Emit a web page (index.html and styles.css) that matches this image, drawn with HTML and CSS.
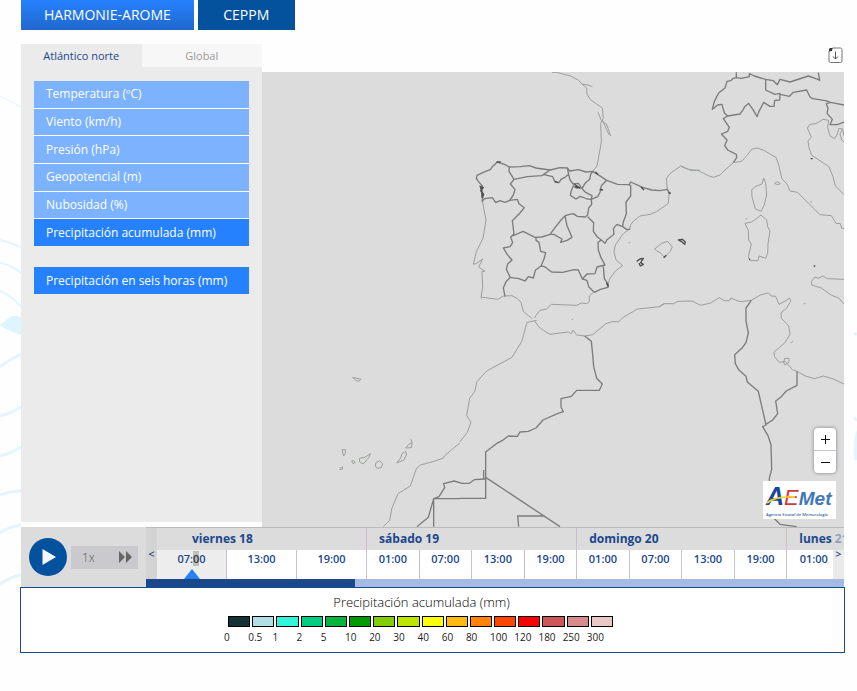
FILE: index.html
```html
<!DOCTYPE html>
<html lang="es">
<head>
<meta charset="utf-8">
<title>Modelos numéricos</title>
<link rel="stylesheet" href="styles.css">
</head>
<body>
<svg class="backdrop" viewBox="0 0 857 691" preserveAspectRatio="none" aria-hidden="true">
  <g fill="none" stroke="#e4f5fd" stroke-width="2">
    <path d="M0 96L21 107" stroke-width="1"/>
    <path d="M0 240Q12 243 21 247M0 263Q12 265 21 273M0 291Q14 298 21 307"/>
    <path d="M0 367Q10 359 21 354M0 416Q12 413 21 407M0 456Q12 453 21 447M0 495Q10 491 21 491M0 533Q8 527 21 525M0 584Q10 577 21 575" stroke-width="3"/>
    <path d="M854 334h3M854 417q2 3 3 3" stroke-width="3"/>
  </g>
  <path d="M0 325L10 317Q16 314 21 318V335Q10 332 0 325Z" fill="#dcf5fe"/>
  <path d="M857 430q-4 8-3 30h3z" fill="#e4f5fd"/>
</svg>
<main class="page">
  <nav class="models">
    <button class="model model-active" type="button">HARMONIE-AROME</button>
    <button class="model" type="button">CEPPM</button>
  </nav>
  <section class="viewer">
    <aside class="panel">
      <div class="tabs">
        <button class="tab tab-active" type="button">Atlántico norte</button>
        <button class="tab" type="button">Global</button>
      </div>
      <div class="menu">
        <button class="item" type="button">Temperatura (ºC)</button>
        <button class="item" type="button">Viento (km/h)</button>
        <button class="item" type="button">Presión (hPa)</button>
        <button class="item" type="button">Geopotencial (m)</button>
        <button class="item" type="button">Nubosidad (%)</button>
        <button class="item item-active" type="button">Precipitación acumulada (mm)</button>
      </div>
      <div class="submenu">
        <button class="item item-active" type="button">Precipitación en seis horas (mm)</button>
      </div>
    </aside>
    <div class="stage">
      <div class="tools">
        <button class="download" type="button" aria-label="Descargar">
          <svg width="15" height="17" viewBox="0 0 15 17" fill="none" stroke="#777">
            <path d="M4.500 1H12.500Q14 1 14 2.500V14Q14 15.500 12.500 15.500H2.500Q1 15.500 1 14V4.500Z"/>
            <path d="M1 4.500V2L2 1H4.500L4 4Z" fill="#333" stroke="none"/>
            <path d="M7.500 4.500V12M5 9.500L7.500 12L10 9.500" stroke="#555"/>
          </svg>
        </button>
      </div>
      <div class="map">
        <svg class="chart" viewBox="262 72 582 455" role="img" aria-label="Mapa del Atlántico norte">
          <g class="coast">
            <g transform="translate(460 60) scale(.33333)">
              <path d="M276 37H292L315 44L330 47L345 55L355 60L367 73L380 84L381 102L391 119L410 132L427 144L430 175L422 190L424 246L418 280L411 318L398 334"/>
              <path d="M414 157L425 184L440 193L452 228M428 181L438 205L448 225M365 72L384 75L397 80"/>
              <path d="M68 425L72 450L78 480L69 535L49 575L40 613L50 610L68 597L56 621L75 634H66L68 680L63 714"/>
              <path d="M720 331L700 330L684 328L662 318L630 341L619 356L622 388L627 400L625 430L590 455L570 463L540 468L520 484L512 494L509 507L490 521L466 555L462 575L468 600L488 617L466 633L449 657L442 680"/>
              <path d="M584 567L605 550L623 544L637 561L630 575L613 592L603 580L590 572ZM506 548h4"/>
            </g>
            <g transform="translate(660 40) scale(.33333)">
              <path d="M220 368L245 364L262 345L275 328L290 324L312 331L330 342L348 352L356 374L366 417L381 432L390 453L412 457L445 489L480 524L514 527L528 550L541 551L545 565H552"/>
              <path d="M220 368L195 390L180 405L160 412L145 407L113 391L96 392L80 386L62 378"/>
              <path d="M552 464L526 437L519 410L507 380L455 346L446 320L444 302L454 292L442 264L450 253L468 251L489 238L506 241L503 262L510 288L524 296L532 282L537 265L548 267L540 282L545 300L552 306M548 267L552 288"/>
              <path d="M311 414L317 430L320 465L312 497L303 514L286 507L276 470L275 450L285 440L306 432ZM303 525L320 540L323 560L330 573L324 612L323 640L317 655L297 648L294 662L270 662L265 650L274 612L266 600L265 572L255 550L275 546L288 537ZM344 430L352 425L361 431L352 434Z"/>
              <path d="M257 537h5M451 486h5"/>
            </g>
            <g transform="translate(460 270) scale(.33333)">
              <path d="M63 86L67 82L113 88L131 78L156 77L172 86L183 97L190 124L205 137L217 146"/>
              <path d="M400 67L388 78V95L380 101L364 99L350 106L274 103L260 117L240 121L228 136L224 144"/>
              <path d="M230 151L201 157L186 213L156 262L80 303L50 336L45 363L29 385L20 436L33 456L22 487L0 515"/>
              <path d="M223 152L236 170L250 181L270 193L325 186L334 191L339 180L350 195L374 198L398 194L438 161L456 155L477 155L488 143L532 117L600 110L614 101"/>
              <path d="M335 148h4"/>
            </g>
            <g transform="translate(660 270) scale(.33333)">
              <path d="M0 108L12 101L40 101L54 94L96 93L122 106L152 99L178 83L192 92L209 92L212 84L240 95L274 91L303 74L325 69L333 78L347 79L357 103L378 92L389 84L392 94L380 114L363 129L364 145L386 168L390 193L374 219L342 246L343 259L358 277L375 275L385 284L397 299L411 304L436 318L464 326L490 318L520 327L552 342"/>
              <path d="M374 265H387V277L375 285L371 278ZM552 102L536 84L515 76L484 54L455 45L454 34L465 21L474 25L489 18L502 26L552 28M431 101h5M392 219L399 214"/>
            </g>
            <g transform="translate(300 360) scale(.33333)">
              <path d="M480 249L472 255L434 287L430 294L403 304L361 315L349 326L331 378L294 401L275 447L269 481L250 500"/>
              <path d="M158 52L183 58L177 64L168 62ZM126 269H136V280L131 288ZM178 295L195 292L211 281L206 293L190 312L179 306ZM228 307L239 303L248 311L244 323L232 325L226 318ZM155 303L160 302L166 307L159 311ZM120 325L127 320V328H118M333 238L336 248L325 254L317 264L334 263L336 248M317 274L320 282L312 300L290 309L302 294L306 281Z"/>
            </g>
          </g>
          <g class="border">
            <g transform="translate(460 60) scale(.33333)">
              <path d="M66 425L70 405L63 388L67 378L58 368L49 356L51 346L70 337L92 328L97 320L112 306L133 313L148 321L181 320L208 317L228 324L270 330L300 323L322 324L329 333L355 329L378 336L398 334L413 343L440 361L473 373L507 374L512 366L548 382L575 390L600 392L622 388L629 400"/>
              <path d="M148 321L147 334L162 358L151 372L165 388L160 405L149 421L135 427L120 422L107 428L97 413L74 416L66 425M162 358L202 350L246 347L270 330M252 344L278 350L285 366L297 368L303 358L315 352L326 343L322 324M326 343L330 360L340 372L355 370L364 382L349 384L340 377L334 392L331 406L348 417L361 409L382 417L394 418L396 407L378 398L366 386L375 370L389 358L392 343L398 334"/>
              <path d="M440 361L424 377L420 397L413 410L394 418L395 433L386 444L383 465L376 471L352 469L340 461L326 464L315 468L303 480L281 508L270 523L245 531L225 532L189 514L158 528M149 421L172 418L177 431L193 443L180 459L157 482L162 522L152 531L158 548L150 560L130 564L142 584L156 600L143 612L139 628L151 652L138 665L130 684L135 710M151 652L176 656L195 663L205 650L220 654L226 631L243 618L252 597L257 578L242 574L237 547L228 541V530"/>
              <path d="M315 468L321 497L336 532L321 541L302 547L306 537L281 523H270M383 470L401 488L400 514L412 531L424 540L435 550L441 539L462 523L460 506L471 493L488 500L490 485L499 462L498 426L512 408L512 377L507 374M488 500L500 508H511M424 540L414 547L415 570L423 593L435 615L411 621L405 641L381 642L367 657L355 630L342 629L308 637L275 636L254 620L243 618M367 657L381 661L386 680L403 697L421 688L444 682L445 673L433 656L430 620"/>
            </g>
            <g transform="translate(660 40) scale(.33333)">
              <path d="M229 97V113L220 115L212 122L201 124L195 144L176 159L163 184L157 208L173 195L186 193L193 219L203 228L240 222L250 208L254 200L266 190L281 212L291 230L297 214L311 187L330 199L342 199L344 181L359 180L360 160L345 163L317 150V118L302 114L283 108L268 101V110L244 115L229 113M317 118L340 122L352 134L360 118L390 126L445 108L474 118L479 121L475 98M360 163L388 169L400 157L440 150L450 171L458 176L496 182L512 187L552 195M203 228L190 236L208 262L203 274L184 282L201 300L194 317L203 330L229 343L230 353L220 368M512 187L499 191L504 205L501 220L517 238L510 254H532L552 246"/>
            </g>
            <g transform="translate(460 270) scale(.33333)">
              <path d="M374 198L394 214L398 253L401 290L410 325L427 342L418 361H350L334 379L303 386V411L310 425L294 430L249 450L228 474L205 484L180 486L172 499L145 498L128 511L109 521L77 546V685H0M71 627V600M77 622L300 770M255 738H173L176 770"/>
            </g>
            <g transform="translate(660 270) scale(.33333)">
              <path d="M274 91L258 114V153L265 189L258 218L247 233L224 254L226 281L236 299L258 319L262 336L295 364L318 465L308 470L324 497L333 525L335 598L328 625L330 720L345 748L360 763L410 770M411 304V346L379 363L362 382L347 393L353 431L338 450L318 463"/>
            </g>
            <g transform="translate(300 360) scale(.33333)">
              <path d="M555 357L523 359L508 370H486L462 363L431 371L434 383L417 410L401 416L385 472L351 500M401 500V416H480"/>
            </g>
          </g>
          <g class="islets" transform="translate(460 60) scale(.33333)">
            <path d="M58 378L70 383L62 392L71 403L65 411M65 380L66 414M60 384H70M342 372L360 384L345 380M543 381L552 390M625 398L633 400M530 604L540 597L550 595L542 608L550 613L541 618L537 609M655 540L667 538L676 546L674 553L665 545ZM611 593L619 586M419 388L429 390M439 668L445 680M406 336L414 343M285 364L294 368M110 306H122"/>
            <path d="M1052 296h6M1061 618h5M867 598h4"/>
          </g>
        </svg>
        <div class="zoom">
          <button class="zoom-button" type="button" aria-label="Acercar"><svg width="22" height="22" viewBox="0 0 22 22"><path d="M7 11.500H16M11.500 7V16"/></svg></button>
          <button class="zoom-button" type="button" aria-label="Alejar"><svg width="22" height="22" viewBox="0 0 22 22"><path d="M7 11.500H16"/></svg></button>
        </div>
        <svg class="logo" width="73" height="38" viewBox="0 0 73 38" role="img" aria-label="AEMet">
          <rect width="73" height="38" fill="#fff"/>
          <text class="logo-name" x="3" y="24"><tspan class="logo-a">A</tspan><tspan class="logo-e">E</tspan><tspan class="logo-met">Met</tspan></text>
          <path d="M4 22Q12 15 32 16" fill="none" stroke="#f8cf32" stroke-width="2"/>
          <text class="logo-caption" x="3" y="35">Agencia Estatal de Meteorología</text>
        </svg>
      </div>
    </div>
  </section>
  <section class="player">
    <div class="controls">
      <button class="play" type="button" aria-label="Reproducir">
        <svg width="38" height="38" viewBox="0 0 38 38"><circle cx="19" cy="19" r="19" fill="#04519e"/><path d="M13.500 11L27 19L13.500 27Z" fill="#f4f8fb"/></svg>
      </button>
      <button class="speed" type="button">1x
        <svg width="14" height="12" viewBox="0 0 14 12"><path d="M1 0L7 6L1 12ZM8 0L14 6L8 12Z" fill="#666"/></svg>
      </button>
    </div>
    <div class="timeline">
      <div class="days">
        <button class="step" type="button" aria-label="Anterior">&lt;</button>
        <div class="day day-first"><div class="date">viernes 18</div><div class="hours"><span class="hour hour-active">07:<mark>0</mark>0</span><span class="hour">13:00</span><span class="hour">19:00</span></div></div>
        <div class="day"><div class="date">sábado 19</div><div class="hours"><span class="hour">01:00</span><span class="hour">07:00</span><span class="hour">13:00</span><span class="hour">19:00</span></div></div>
        <div class="day"><div class="date">domingo 20</div><div class="hours"><span class="hour">01:00</span><span class="hour">07:00</span><span class="hour">13:00</span><span class="hour">19:00</span></div></div>
        <div class="day day-last"><div class="date">lunes 21</div><div class="hours"><span class="hour">01:00</span></div></div>
        <button class="step step-next" type="button" aria-label="Siguiente">&gt;</button>
      </div>
      <div class="progress"><div class="progress-done"></div></div>
    </div>
  </section>
  <section class="legend">
    <h2 class="legend-title">Precipitación acumulada (mm)</h2>
    <ul class="scale">
      <li><i class="swatch c1"></i><span>0</span></li>
      <li><i class="swatch c2"></i><span>0.5</span></li>
      <li><i class="swatch c3"></i><span>1</span></li>
      <li><i class="swatch c4"></i><span>2</span></li>
      <li><i class="swatch c5"></i><span>5</span></li>
      <li><i class="swatch c6"></i><span>10</span></li>
      <li><i class="swatch c7"></i><span>20</span></li>
      <li><i class="swatch c8"></i><span>30</span></li>
      <li><i class="swatch c9"></i><span>40</span></li>
      <li><i class="swatch c10"></i><span>60</span></li>
      <li><i class="swatch c11"></i><span>80</span></li>
      <li><i class="swatch c12"></i><span>100</span></li>
      <li><i class="swatch c13"></i><span>120</span></li>
      <li><i class="swatch c14"></i><span>180</span></li>
      <li><i class="swatch c15"></i><span>250</span></li>
      <li><i class="swatch c16"></i><span>300</span></li>
    </ul>
  </section>
</main>
</body>
</html>
```
FILE: styles.css
```css
* { box-sizing: border-box; }
body { margin: 0; background: #fefefe; font-family: "Open Sans", sans-serif; font-size: 12px; color: #1b478d; }
button { margin: 0; padding: 0; border: 0; background: none; font: inherit; color: inherit; cursor: pointer; }
svg { display: block; }

.backdrop { position: absolute; inset: 0; width: 100%; height: 691px; z-index: -1; }
.page { padding: 0 13px 0 21px; }

.models { display: flex; gap: 4px; margin-bottom: 14px; }
.model { min-width: 97px; height: 30px; padding: 0 23px; background: #04519e; color: #fff; font-size: 14px; line-height: 30px; }
.model-active { background: linear-gradient(#2681ff, #2068cc); }

.viewer { display: flex; }
.panel { width: 241px; flex: none; margin-bottom: 5px; background: #ebebeb; }
.tabs { display: flex; margin-bottom: 14px; }
.tab { flex: 1; height: 23px; background: #f7f7f7; color: #999; font-size: 11px; line-height: 23px; }
.tab-active { background: #ebebeb; color: #1b478d; }
.menu { display: grid; grid-auto-rows: 1fr; gap: 1px; height: 165px; margin: 0 13px 21px; background: #fff; }
.submenu { display: grid; height: 27px; margin: 0 13px; }
.item { min-height: 0; padding: 0 12px; background: #7cb2ff; color: #fff; text-align: left; line-height: 26px; }
.item-active { background: #2681ff; }

.stage { flex: 1; min-width: 0; }
.tools { display: flex; justify-content: flex-end; height: 28px; padding: 3px 1px 0; }
.download { height: 17px; }
.map { position: relative; background: #dcdcdc; }
.chart { width: 100%; height: auto; }
.coast, .border, .islets { fill: none; stroke-linejoin: round; }
.coast { stroke: #9a9f9a; stroke-width: 3; }
.border { stroke: #7c7c7c; stroke-width: 4; }
.islets { stroke: #4c4c4c; stroke-width: 4; }
.zoom { position: absolute; right: 8px; bottom: 54px; width: 22px; border-radius: 4px; background: #fff; box-shadow: 0 0 3px 1px #a5a0a8; }
.zoom-button { display: block; width: 22px; height: 22px; }
.zoom-button path { stroke: #111; stroke-width: 1; }
.zoom-button + .zoom-button { height: 23px; border-top: 1px solid #c5c5d8; }
.logo { position: absolute; right: 8px; bottom: 8px; }
.logo-name { font: italic 22px "Liberation Sans", sans-serif; }
.logo-a { fill: #17469e; font-size: 25px; font-weight: 700; }
.logo-e { fill: #cd3c38; }
.logo-met { fill: #4176b8; font-size: 19px; font-weight: 700; }
.logo-caption { fill: #3267a8; font: 600 4px "Open Sans", sans-serif; }

.player { display: flex; height: 60px; background: #dcdcdc; }
.controls { display: flex; align-items: center; gap: 4px; width: 125px; flex: none; padding-left: 8px; }
.speed { display: flex; align-items: center; justify-content: space-between; width: 67px; height: 23px; padding: 0 6px 0 11px; background: #cacace; color: #555; font-weight: 300; }
.timeline { display: flex; flex-direction: column; flex: 1; min-width: 0; border-top: 1px solid #bbb; }
.days { position: relative; display: flex; flex: 1; min-height: 0; overflow: hidden; }
.step { width: 11px; flex: none; background: #d3d3d3; font-size: 11px; font-weight: 600; }
.step-next { position: absolute; top: 0; right: 0; bottom: 0; background: #dcdcdc99; }
.day { flex: 210 1 0; min-width: 0; background: #fff; }
.day + .day { border-left: 1px solid #cbbfd0; }
.day-last { flex-grow: 57; overflow: hidden; }
.date { height: 22px; padding-left: 12px; background: #dcdcdc; font-weight: 700; line-height: 22px; white-space: nowrap; }
.day-first .date { padding-left: 35px; }
.hours { display: flex; }
.hour { position: relative; flex: 1; height: 29px; font-size: 11px; font-weight: 600; line-height: 17px; text-align: center; }
.hour + .hour { border-left: 1px solid #cbbfd0; }
.hour mark { background: #bfbfbf; color: #333; }
.day-last .hour { flex: none; width: 53px; }
.hour-active { background: #ededed; }
.hour-active::after { content: ""; position: absolute; left: 50%; bottom: 0; margin-left: -8px; border: solid transparent; border-width: 0 8px 10px; border-bottom-color: #2681ff; }
.progress { height: 8px; background: #a4bce3; }
.progress-done { width: 30%; height: 8px; background: #1b478d; }

.legend { display: flex; flex-direction: column; align-items: center; margin: 0 -1px; padding: 5px 22px 7px 0; border: 1px solid #1b478d; background: #fff; }
.legend-title { margin: 0 0 5px; color: #000; font-size: 13px; font-weight: 300; line-height: 18px; }
.scale { display: grid; grid-template-columns: repeat(16, 1fr); width: 387px; margin: 0; padding: 0; list-style: none; color: #222; font-size: 10px; line-height: 14px; }
.scale li { min-width: 0; }
.scale span { display: block; margin: 3px 0 1px -4px; }
.swatch { display: block; height: 11px; margin-right: 2px; border: 1px solid #000; }
.c1 { background: #143236; }
.c2 { background: #b0e0e6; }
.c3 { background: #32f5dc; }
.c4 { background: #00cd82; }
.c5 { background: #00b43c; }
.c6 { background: #009b00; }
.c7 { background: #82cd00; }
.c8 { background: #bee600; }
.c9 { background: #ff0; }
.c10 { background: #ffb914; }
.c11 { background: #ff820a; }
.c12 { background: #ff4600; }
.c13 { background: #f00; }
.c14 { background: #cd5555; }
.c15 { background: #d68c8c; }
.c16 { background: #ebc8c8; }
```
